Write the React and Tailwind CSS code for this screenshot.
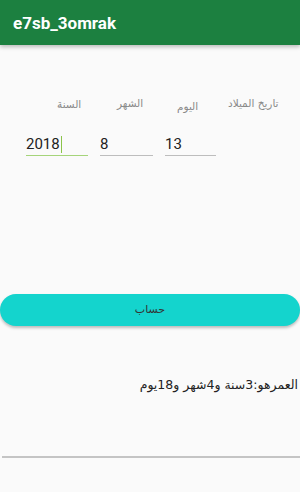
import React from "react"

const arabic = { fontFamily: '"DejaVu Sans", "Noto Sans", sans-serif' }

export default function App() {
  return (
    <div className="w-[300px] h-[492px] bg-[#fafafa] flex flex-col overflow-hidden" style={{ fontFamily: "Roboto, sans-serif" }}>
      {/* App bar */}
      <div className="h-[45px] shrink-0 bg-[#1c8040] flex items-center px-[13px] shadow-[0_2px_4px_rgba(0,0,0,0.25)] z-10">
        <span className="text-white font-bold text-[17px] leading-[20px]">e7sb_3omrak</span>
      </div>

      {/* Labels */}
      <div className="flex items-start mt-[51px] h-[14px] text-[10.5px] leading-[14px] text-[#8a8a8a]" style={arabic}>
        <span className="ml-[57px] w-[60px] mt-[1px]">السنة</span>
        <span className="w-[60px]">الشهر</span>
        <span className="w-[51px] mt-[3px]">اليوم</span>
        <span>تاريخ الميلاد</span>
      </div>

      {/* Inputs */}
      <div className="flex items-end mt-[23px] h-[23px] text-[15px] leading-[18px] text-[#222]">
        <div className="ml-[26px] w-[62px] h-[23px] border-b-[1.5px] border-[#a5d47a] flex items-end pb-[2px]">
          <span>2018</span>
          <span className="w-[1.5px] h-[17px] bg-[#8bc34a] ml-[1px]"></span>
        </div>
        <div className="ml-[12px] w-[53px] h-[23px] border-b-[1.5px] border-[#bdbdbd] flex items-end pb-[2px]">
          <span>8</span>
        </div>
        <div className="ml-[12px] w-[51px] h-[24px] border-b-[1.5px] border-[#bdbdbd] flex items-end pb-[2px]">
          <span>13</span>
        </div>
      </div>

      {/* Button */}
      <div className="mt-[138px] h-[32px] shrink-0 rounded-full bg-[#14d4cd] shadow-[0_2px_3px_rgba(0,0,0,0.25)] flex items-center justify-center">
        <span className="text-[11px] text-[#333]" style={arabic}>حساب</span>
      </div>

      {/* Result */}
      <div className="mt-[50px] h-[18px] pr-[2px] text-right text-[12.5px] leading-[18px] text-[#222]" dir="rtl" style={arabic}>
        العمرهو:3سنة و4شهر و18يوم
      </div>

      {/* Bottom line */}
      <div className="mt-[62px] ml-[2px] h-[1.5px] shrink-0 bg-[#c4c4c4]"></div>
    </div>
  )
}
